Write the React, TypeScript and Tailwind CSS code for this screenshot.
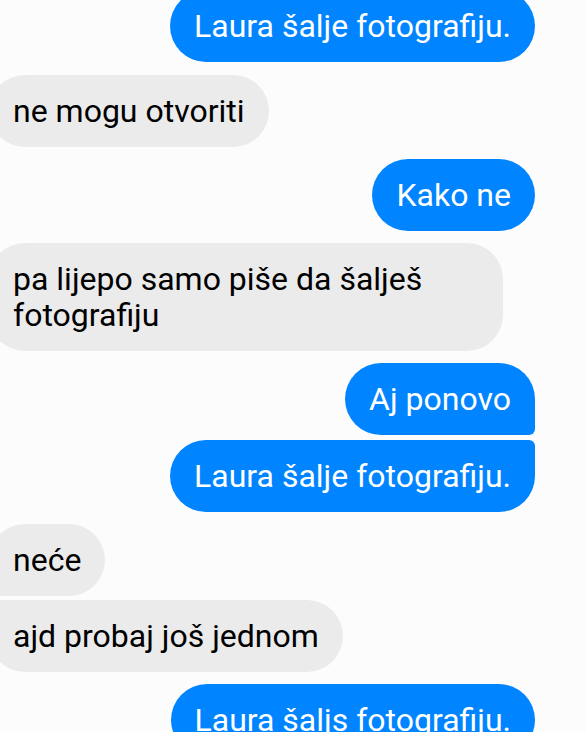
import React from "react";

type Msg = { text: string; out: boolean; corner: string; mt: string };

const msgs: Msg[] = [
  { text: "Laura šalje fotografiju.", out: true, corner: "rounded-[36px]", mt: "mt-0" },
  { text: "ne mogu otvoriti", out: false, corner: "rounded-[36px]", mt: "mt-[13px]" },
  { text: "Kako ne", out: true, corner: "rounded-[36px]", mt: "mt-[12px]" },
  { text: "pa lijepo samo piše da šalješ fotografiju", out: false, corner: "rounded-[36px]", mt: "mt-[12px]" },
  { text: "Aj ponovo", out: true, corner: "rounded-[36px] rounded-br-[6px]", mt: "mt-[12px]" },
  { text: "Laura šalje fotografiju.", out: true, corner: "rounded-[36px] rounded-tr-[6px]", mt: "mt-[5px]" },
  { text: "neće", out: false, corner: "rounded-[36px] rounded-bl-[6px]", mt: "mt-[12px]" },
  { text: "ajd probaj još jednom", out: false, corner: "rounded-[36px] rounded-tl-[6px]", mt: "mt-[4px]" },
  { text: "Laura šaljs fotografiju.", out: true, corner: "rounded-[36px]", mt: "mt-[12px]" },
];

export default function App() {
  return (
    <div
      className="h-[732px] w-[586px] overflow-hidden bg-[#fcfcfc]"
      style={{ fontFamily: "Roboto, 'Noto Sans', sans-serif" }}
    >
      <div className="-mt-[10px] -ml-[11px] flex flex-col pr-[51px]">
        {msgs.map((m, i) => (
          <div key={i} className={`flex ${m.out ? "justify-end" : "justify-start"} ${m.mt}`}>
            <div
              className={`${m.corner} max-w-[514px] px-[24px] py-[18px] text-[32px] leading-[36px] ${
                m.out ? "bg-[#0084ff] text-white" : "bg-[#ebebeb] text-black"
              }`}
            >
              {m.text}
            </div>
          </div>
        ))}
      </div>
    </div>
  );
}
